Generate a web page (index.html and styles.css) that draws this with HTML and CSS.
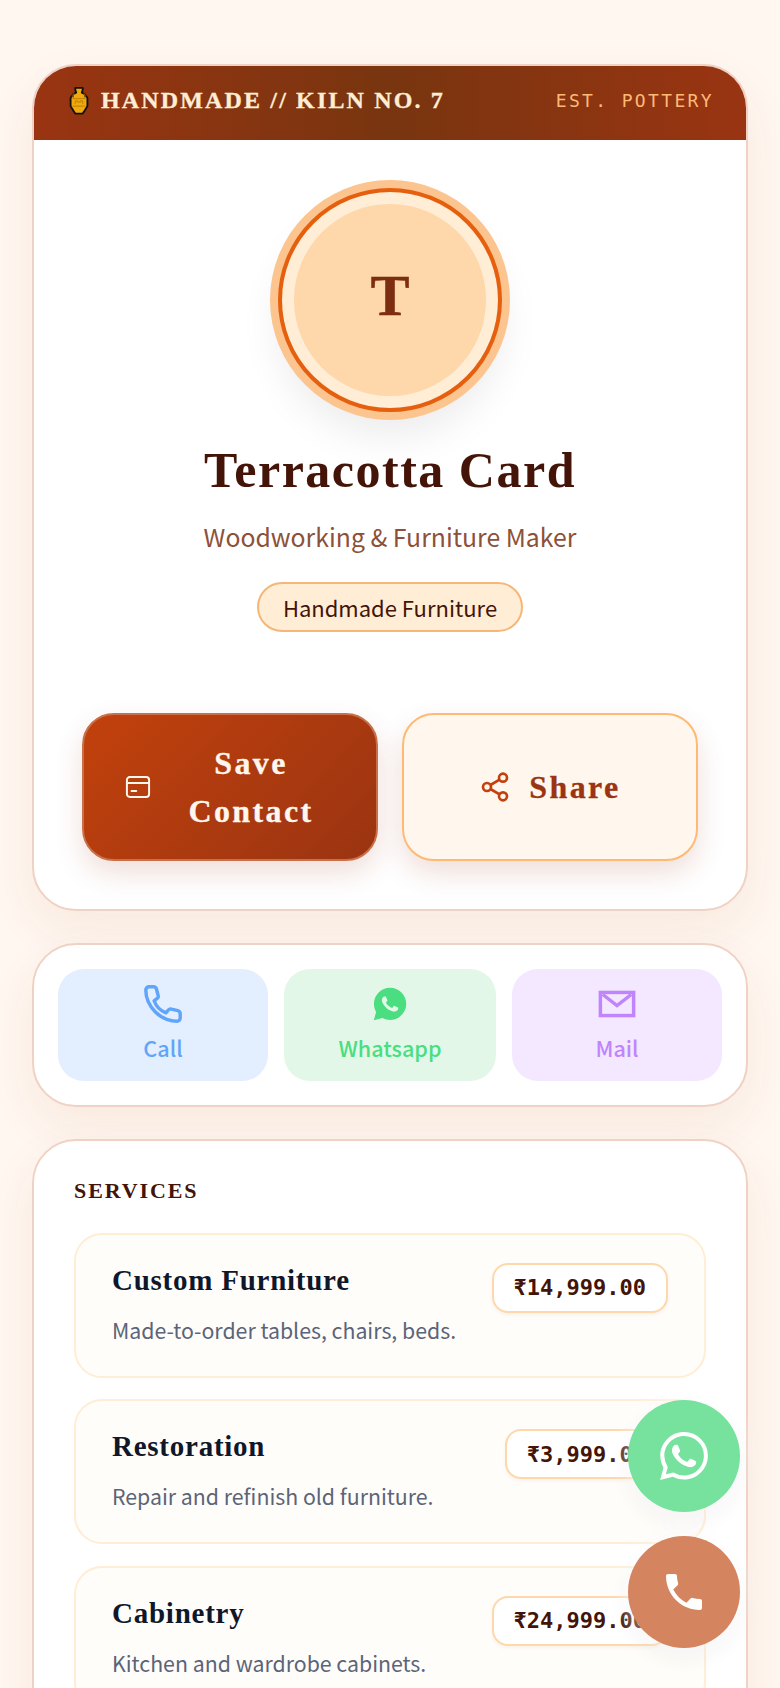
FILE: index.html
```html
<!DOCTYPE html>
<html lang="en">
<head>
<meta charset="utf-8">
<title>Terracotta Card</title>
<link rel="stylesheet" href="styles.css">
</head>
<body>
<main class="page">
  <section class="card profile">
    <header class="banner">
      <div class="brand">
        <svg class="jar" viewBox="0 0 20 30" aria-hidden="true">
          <path d="M6 1h8v2l-1 3 3 1.500 3 4v9l-3 5-2 3H6l-2-3-3-5v-9l3-4L7 6 6 3z" fill="#f0a90c" stroke="#111" stroke-width="2" stroke-linejoin="round"/>
          <path d="M3 12.500h14M3 20.500h14M6 18v-3h3v2M14 18v-3h-3v2" fill="none" stroke="#b97a08" stroke-width="1"/>
          <path d="M5 7c-1.500 1-2 2.500-1 4M15 7c1.500 1 2 2.500 1 4" fill="none" stroke="#7a4a05" stroke-width="1.500"/>
        </svg>
        <span>HANDMADE // KILN NO. 7</span>
      </div>
      <span class="est">EST. POTTERY</span>
    </header>
    <div class="intro">
      <div class="avatar"><span>T</span></div>
      <h1 class="name">Terracotta Card</h1>
      <p class="role">Woodworking &amp; Furniture Maker</p>
      <span class="tag">Handmade Furniture</span>
    </div>
    <div class="actions">
      <a class="btn btn-save">
        <svg class="btn-icon" viewBox="0 0 24 24" fill="none" stroke="currentColor" stroke-width="1.700" stroke-linecap="round" stroke-linejoin="round" aria-hidden="true"><rect x="2.500" y="3.500" width="19" height="17" rx="2.500"/><path d="M2.500 8.500h19M6.500 15.500h4"/></svg>
        <span class="save-label">Save Contact</span>
      </a>
      <a class="btn btn-share">
        <svg class="btn-icon" viewBox="0 0 24 24" fill="none" stroke="currentColor" stroke-width="2" aria-hidden="true"><circle cx="18" cy="5" r="3"/><circle cx="6" cy="12" r="3"/><circle cx="18" cy="19" r="3"/><path d="M8.600 10.500l6.800-4M8.600 13.500l6.800 4"/></svg>
        <span>Share</span>
      </a>
    </div>
  </section>

  <section class="card quick">
    <a class="tile tile-call">
      <svg class="tile-icon" viewBox="2 1 21 21" fill="none" stroke="currentColor" stroke-width="1.900" stroke-linejoin="round" aria-hidden="true"><path d="M3 3.800C3 2.800 3.800 2 4.800 2h2.400c.8 0 1.500.5 1.700 1.300l.9 3.400c.2.600 0 1.300-.5 1.700L7.600 9.700c1 2.800 3.500 5.500 6.500 6.700l1.400-1.600c.4-.5 1.100-.7 1.700-.5l3.500.9c.8.200 1.300.9 1.300 1.700v2.300c0 1-.800 1.800-1.800 1.800C11 21 3 12.700 3 3.800z"/></svg>
      <span>Call</span>
    </a>
    <a class="tile tile-wa">
      <svg class="tile-icon" viewBox="-2 -2 28 28" aria-hidden="true"><path d="M12.050 0C5.500 0 .16 5.340.16 11.890c0 2.100.55 4.140 1.590 5.950L.06 24l6.300-1.650a11.880 11.880 0 0 0 5.690 1.450c6.550 0 11.890-5.340 11.890-11.900 0-3.180-1.240-6.170-3.480-8.410A11.820 11.820 0 0 0 12.050 0z" fill="currentColor"/><path d="M17.472 14.382c-.297-.149-1.758-.867-2.03-.967-.273-.099-.471-.148-.67.15-.197.297-.767.966-.94 1.164-.173.199-.347.223-.644.075-.297-.15-1.255-.463-2.39-1.475-.883-.788-1.48-1.761-1.653-2.059-.173-.297-.018-.458.13-.606.134-.133.298-.347.446-.52.149-.174.198-.298.298-.497.099-.198.05-.371-.025-.52-.075-.149-.669-1.612-.916-2.207-.242-.579-.487-.5-.669-.51-.173-.008-.371-.01-.57-.01-.198 0-.52.074-.792.372-.272.297-1.04 1.016-1.04 2.479 0 1.462 1.065 2.875 1.213 3.074.149.198 2.096 3.2 5.077 4.487.709.306 1.262.489 1.694.625.712.227 1.36.195 1.871.118.571-.085 1.758-.719 2.006-1.413.248-.694.248-1.289.173-1.413-.074-.124-.272-.198-.57-.347" fill="#e3f7e9"/></svg>
      <span>Whatsapp</span>
    </a>
    <a class="tile tile-mail">
      <svg class="tile-icon" viewBox="0 0 24 24" fill="none" stroke="currentColor" stroke-width="2.200" stroke-linejoin="miter" aria-hidden="true"><rect x="1.500" y="4.700" width="21" height="14.600"/><path d="M3 6l9 7 9-7"/></svg>
      <span>Mail</span>
    </a>
  </section>

  <section class="card services">
    <h2 class="section-title">SERVICES</h2>
    <div class="service-list">
      <article class="service">
        <div class="service-text"><h3>Custom Furniture</h3><p>Made-to-order tables, chairs, beds.</p></div>
        <span class="price">₹14,999.00</span>
      </article>
      <article class="service">
        <div class="service-text"><h3>Restoration</h3><p>Repair and refinish old furniture.</p></div>
        <span class="price">₹3,999.00</span>
      </article>
      <article class="service">
        <div class="service-text"><h3>Cabinetry</h3><p>Kitchen and wardrobe cabinets.</p></div>
        <span class="price">₹24,999.00</span>
      </article>
    </div>
  </section>
</main>

<div class="fabs">
  <a class="fab fab-wa">
    <svg viewBox="0 0 24 24" aria-hidden="true"><path fill="#fff" d="M17.472 14.382c-.297-.149-1.758-.867-2.03-.967-.273-.099-.471-.148-.67.15-.197.297-.767.966-.94 1.164-.173.199-.347.223-.644.075-.297-.15-1.255-.463-2.39-1.475-.883-.788-1.48-1.761-1.653-2.059-.173-.297-.018-.458.13-.606.134-.133.298-.347.446-.52.149-.174.198-.298.298-.497.099-.198.05-.371-.025-.52-.075-.149-.669-1.612-.916-2.207-.242-.579-.487-.5-.669-.51-.173-.008-.371-.01-.57-.01-.198 0-.52.074-.792.372-.272.297-1.04 1.016-1.04 2.479 0 1.462 1.065 2.875 1.213 3.074.149.198 2.096 3.2 5.077 4.487.709.306 1.262.489 1.694.625.712.227 1.36.195 1.871.118.571-.085 1.758-.719 2.006-1.413.248-.694.248-1.289.173-1.413-.074-.124-.272-.198-.57-.347m-5.421 7.403h-.004a9.87 9.87 0 01-5.031-1.378l-.361-.214-3.741.982.998-3.648-.235-.374a9.86 9.86 0 01-1.51-5.26c.001-5.45 4.436-9.884 9.888-9.884 2.64 0 5.122 1.03 6.988 2.898a9.825 9.825 0 012.893 6.994c-.003 5.45-4.437 9.884-9.885 9.884m8.413-18.297A11.815 11.815 0 0012.05 0C5.495 0 .16 5.335.157 11.892c0 2.096.547 4.142 1.588 5.945L.057 24l6.305-1.654a11.882 11.882 0 005.683 1.448h.005c6.554 0 11.89-5.335 11.893-11.893a11.821 11.821 0 00-3.48-8.413z"/></svg>
  </a>
  <a class="fab fab-call">
    <svg viewBox="0 0 24 24" aria-hidden="true"><path fill="#fff" d="M6.620 10.790c1.440 2.830 3.760 5.140 6.590 6.590l2.200-2.200c.270-.270.670-.360 1.020-.240 1.120.370 2.330.570 3.570.570.550 0 1 .450 1 1V20c0 .550-.450 1-1 1C10.610 21 3 13.390 3 4c0-.550.450-1 1-1h3.500c.550 0 1 .450 1 1 0 1.250.200 2.450.570 3.570.110.350.030.740-.250 1.020l-2.200 2.200z"/></svg>
  </a>
</div>
</body>
</html>
```
FILE: styles.css
```css
* { box-sizing: border-box; }
html, body { margin: 0; padding: 0; }
body {
  background: #fff7f0;
  font-family: "Noto Sans CJK SC", "Noto Sans", sans-serif;
  color: #431407;
}
a { text-decoration: none; }
h1, h2, h3, p { margin: 0; }

.page {
  padding: 64px 32px 32px;
  display: flex;
  flex-direction: column;
  gap: 32px;
}
.card {
  background: #fff;
  border: 2px solid #f0d2c4;
  border-radius: 44px;
  box-shadow: 0 20px 50px rgba(154, 52, 18, .07);
  overflow: hidden;
}

.banner {
  height: 74px;
  padding: 0 32px 5px 35px;
  display: flex;
  align-items: center;
  justify-content: space-between;
  background: linear-gradient(90deg, #9a3412, #78350f 50%, #9a3412);
}
.brand {
  display: flex;
  align-items: center;
  gap: 12px;
  font: 700 24px "Liberation Serif", serif;
  letter-spacing: 2.15px;
  color: #ffedd5;
  -webkit-text-stroke: .3px currentColor;
}
.jar { width: 20px; height: 28px; flex: none; }
.est {
  font: 400 18px "DejaVu Sans Mono", monospace;
  letter-spacing: 2.35px;
  color: #fdba74;
}

.intro {
  display: flex;
  flex-direction: column;
  align-items: center;
  padding-top: 48px;
}
.avatar {
  width: 224px;
  height: 224px;
  border: 4px solid #e65f0e;
  border-radius: 50%;
  background: #fed7aa;
  box-shadow: 0 0 0 8px #fcc48f, inset 0 0 0 12px #ffedd5, 0 24px 40px rgba(0, 0, 0, .08);
  display: flex;
  align-items: center;
  justify-content: center;
}
.avatar span {
  font: 700 58px/1 "Liberation Serif", serif;
  color: #7c2d12;
  padding-bottom: 8px;
  -webkit-text-stroke: .6px currentColor;
}
.name {
  margin-top: 20px;
  padding-top: 8px;
  font: 700 50px/60px "Liberation Serif", serif;
  letter-spacing: 1.5px;
  color: #431407;
}
.role {
  margin-top: 16px;
  font-size: 24.8px;
  line-height: 40px;
  font-weight: 400;
  color: #8d5139;
}
.tag {
  margin-top: 26px;
  padding: 0 24px;
  height: 50px;
  display: flex;
  align-items: center;
  background: #ffedd5;
  border: 2px solid #f5b777;
  border-radius: 25px;
  font-size: 22px;
  font-weight: 400;
  color: #431407;
}

.actions {
  display: flex;
  gap: 24px;
  padding: 81px 48px 48px;
}
.btn {
  flex: 1 1 0;
  min-height: 148px;
  border-radius: 32px;
  border: 2px solid;
  padding: 24px 40px;
  display: flex;
  align-items: center;
  justify-content: center;
  gap: 14px;
  font: 700 32px/48px "Liberation Serif", serif;
  letter-spacing: 2.4px;
  -webkit-text-stroke: .3px currentColor;
  box-shadow: 0 12px 28px rgba(154, 52, 18, .16);
}
.btn-icon { width: 28px; height: 28px; flex: none; }
.btn-save {
  color: #fff7ed;
  background: linear-gradient(135deg, #c2410c, #9a3412);
  border-color: #c8704a;
}
.save-label { flex: 1; text-align: center; }
.btn-share {
  color: #9a3412;
  background: #fff7ed;
  border-color: #fdba74;
  gap: 18px;
}
.btn-share .btn-icon { color: #c2410c; width: 32px; height: 32px; }

.quick {
  padding: 24px;
  display: grid;
  grid-template-columns: 1fr 1.01fr 1fr;
  gap: 16px;
}
.tile {
  height: 112px;
  padding-bottom: 1px;
  border-radius: 26px;
  display: flex;
  flex-direction: column;
  align-items: center;
  justify-content: center;
  gap: 9px;
  font-size: 21.6px;
  font-weight: 500;
  line-height: 32px;
}
.tile-icon { width: 38px; height: 38px; }
.tile-call { background: #e3eefe; color: #60a5fa; }
.tile-wa { background: #e3f7e9; color: #4ade80; }
.tile-mail { background: #f3e8ff; color: #c084fc; }

.services { padding: 32.500px 40px 40px; }
.section-title {
  font: 700 22px/34px "Liberation Serif", serif;
  letter-spacing: 1.9px;
  color: #431407;
}
.service-list {
  margin-top: 25px;
  display: flex;
  flex-direction: column;
  gap: 21.500px;
}
.service {
  display: flex;
  justify-content: space-between;
  align-items: flex-start;
  gap: 16px;
  padding: 28px 36px;
  background: #fffdfa;
  border: 2px solid #ffedd5;
  border-radius: 28px;
  min-height: 145px;
}
.service h3 {
  font: 700 29px/34px "Liberation Serif", serif;
  letter-spacing: .75px;
  color: #0f172a;
}
.service p {
  margin-top: 18px;
  font-size: 21.300px;
  line-height: 30px;
  color: #5b6478;
}
.price {
  flex: none;
  height: 50px;
  padding: 0 20px;
  display: flex;
  align-items: center;
  background: #fff;
  border: 2px solid #fed7aa;
  border-radius: 16px;
  font: 700 22px "DejaVu Sans Mono", monospace;
  color: #431407;
  box-shadow: 0 2px 4px rgba(154, 52, 18, .06);
}

.fabs {
  position: fixed;
  right: 40px;
  bottom: 40px;
  display: flex;
  flex-direction: column;
  gap: 24px;
}
.fab {
  width: 112px;
  height: 112px;
  border-radius: 50%;
  display: flex;
  align-items: center;
  justify-content: center;
  box-shadow: 0 0 26px rgba(255, 255, 255, .75), 0 10px 30px rgba(0, 0, 0, .06);
}
.fab svg { width: 48px; height: 48px; }
.fab-wa { background: #77e29d; }
.fab-call { background: #d4845f; }
```
